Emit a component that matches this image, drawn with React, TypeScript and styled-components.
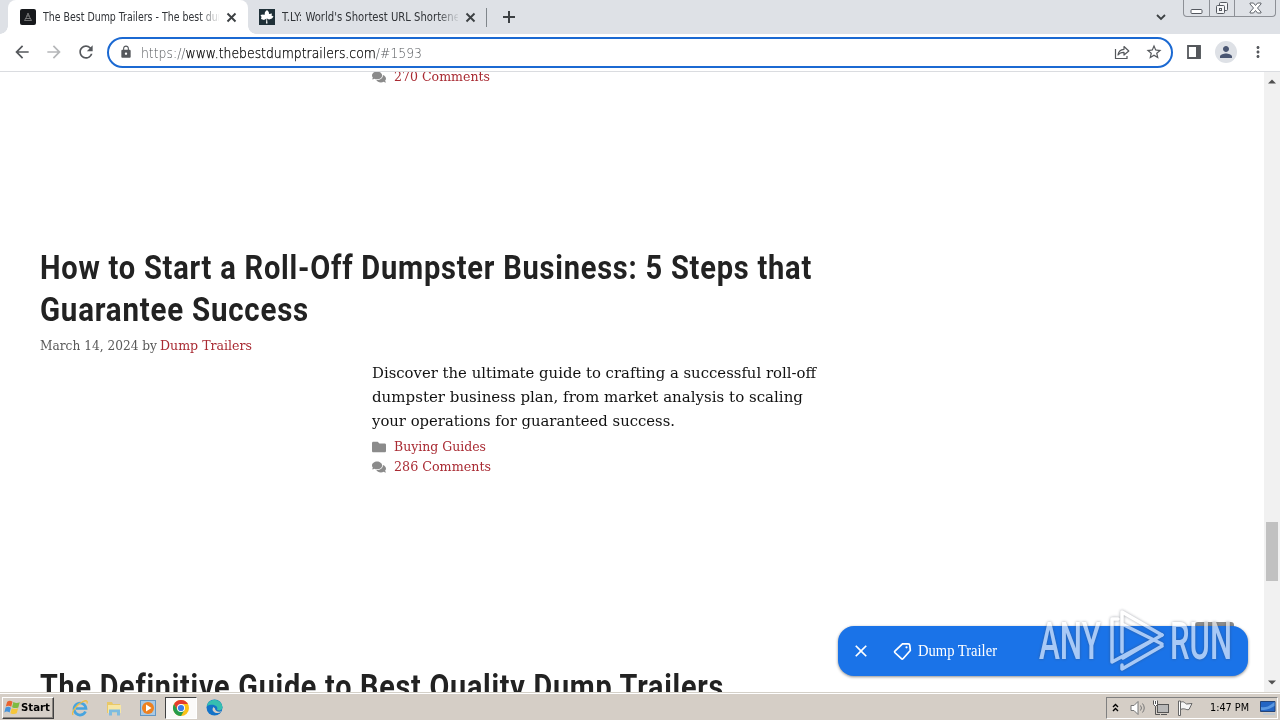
import React, { useLayoutEffect, useRef, useState } from "react";
import styled, { createGlobalStyle, css } from "styled-components";
import { FaComments, FaFolder } from "react-icons/fa";
import { MdArrowBack, MdArrowForward, MdClose, MdLock, MdMoreVert, MdPerson, MdRefresh, MdStarBorder } from "react-icons/md";

const GlobalStyle = createGlobalStyle`
  * { box-sizing: border-box; }
  html, body { margin: 0; padding: 0; background: #fff; overflow: hidden; }
  svg { display: block; flex: none; overflow: visible; }
`;

const uiFont = `"DejaVu Sans Condensed", "DejaVu Sans", sans-serif`;
const slabFont = `"DejaVu Serif", serif`;

const Screen = styled.div`
  position: relative;
  display: flex;
  flex-direction: column;
  width: 1280px;
  height: 720px;
  overflow: hidden;
  font-family: ${uiFont};
`;

/* text squeezed or stretched to a given width */
const FitBox = styled.span<{ $width: number }>`
  display: inline-block;
  flex: none;
  width: ${(p) => p.$width}px;
  white-space: nowrap;
`;

const FitInner = styled.span`
  display: inline-block;
  transform-origin: 0 50%;
`;

function Fit({ width, children }: { width: number; children: React.ReactNode }) {
  const ref = useRef<HTMLSpanElement>(null);
  const [scale, setScale] = useState(1);

  useLayoutEffect(() => {
    const natural = parseFloat(getComputedStyle(ref.current!).width);
    if (natural) setScale(width / natural);
  }, [width]);

  return (
    <FitBox $width={width}>
      <FitInner ref={ref} style={{ transform: `scaleX(${scale})` }}>
        {children}
      </FitInner>
    </FitBox>
  );
}

/* ---------- tab strip ---------- */

const TabStrip = styled.div`
  display: flex;
  height: 34px;
  padding-left: 8px;
  background: #dee1e6;
`;

const Tab = styled.div<{ $active?: boolean }>`
  position: relative;
  display: flex;
  align-items: center;
  width: ${(p) => (p.$active ? 240 : 238)}px;
  padding-left: ${(p) => (p.$active ? 12 : 11)}px;
  font-size: 11.5px;
  color: #303337;
  ${(p) =>
    p.$active &&
    css`
      background: #fff;
      border-radius: 8px 8px 0 0;
      &::before,
      &::after {
        content: "";
        position: absolute;
        bottom: 0;
        width: 8px;
        height: 8px;
      }
      &::before {
        left: -8px;
        background: radial-gradient(circle at 0 0, #dee1e6 7.5px, #fff 8px);
      }
      &::after {
        right: -8px;
        background: radial-gradient(circle at 100% 0, #dee1e6 7.5px, #fff 8px);
      }
    `}
`;

const TabTitle = styled.div`
  width: 176px;
  margin: 0 7px;
  overflow: hidden;
  line-height: 18px;
  mask-image: linear-gradient(90deg, #000 155px, transparent 178px);
`;

const TabDivider = styled.div`
  width: 1px;
  height: 19px;
  margin: 8px 15px 0 0;
  background: #80868b;
`;

const NewTab = styled.div`
  padding-top: 10px;
`;

const StripEnd = styled.div`
  display: flex;
  margin-left: auto;
  padding-right: 4px;
  gap: 15px;
`;

const TabSearch = styled.div`
  padding-top: 12px;
`;

const WindowButtons = styled.div`
  display: flex;
  width: 93px;
  height: 17px;
  border: 1px solid #8d9096;
  border-top: 0;
  border-radius: 0 0 4px 4px;
`;

const WindowButton = styled.div<{ $width: number }>`
  display: flex;
  justify-content: center;
  align-items: center;
  width: ${(p) => p.$width}px;
  & + & {
    border-left: 1px solid #8d9096;
  }
`;

/* ---------- toolbar ---------- */

const Toolbar = styled.div`
  display: flex;
  align-items: center;
  height: 38px;
  padding: 0 13px 1px 12px;
  border-bottom: 1px solid #dadce0;
  background: #fff;
  color: #55585c;
`;

const NavButtons = styled.div`
  display: flex;
  gap: 12px;
  width: 95px;
`;

const AddressBar = styled.div`
  display: flex;
  align-items: center;
  width: 1066px;
  height: 31px;
  padding: 0 8px 0 10px;
  border: 2px solid #1b69d2;
  border-radius: 16px;
`;

const Url = styled.div`
  margin-left: 8px;
  padding-top: 1px;
  font-family: "DejaVu Sans", sans-serif;
  font-weight: 200;
  font-size: 14px;
  line-height: 20px;
  color: #55585c;
  b {
    font-weight: 200;
    color: #000;
    -webkit-text-stroke: 0.25px #000;
  }
`;

const AddressActions = styled.div`
  display: flex;
  align-items: center;
  gap: 15px;
  margin-left: auto;
`;

const ToolbarActions = styled.div`
  display: flex;
  align-items: center;
  margin-left: 14px;
`;

const Avatar = styled.div`
  display: flex;
  justify-content: center;
  align-items: center;
  width: 22px;
  height: 22px;
  margin: 0 12px 0 14px;
  border-radius: 50%;
  background: #dee1e6;
  color: #4a5672;
`;

/* ---------- page ---------- */

const Viewport = styled.div`
  display: flex;
  justify-content: space-between;
  height: 620px;
  overflow: hidden;
  background: #fff;
`;

const Posts = styled.main`
  width: 860px;
  padding-left: 40px;
`;

const Post = styled.article`
  height: 419px;
`;

const PreviousPost = styled.div`
  height: 179px;
  padding: 0 0 0 332px;
  margin-top: -5px;
`;

const PostTitle = styled.h2`
  display: flex;
  flex-direction: column;
  margin: 0;
  font-family: Roboto, sans-serif;
  font-weight: 700;
  font-size: 34px;
  line-height: 42px;
  letter-spacing: 0.9px;
  color: #222;
`;

const Meta = styled.div`
  display: flex;
  height: 30px;
  padding-top: 6px;
  font-family: ${slabFont};
  font-size: 12.5px;
  line-height: 20px;
  gap: 3px;
  color: #595959;
`;

const PostLink = styled.a`
  color: #a92b33;
`;

const Summary = styled.div`
  display: flex;
  flex-direction: column;
  padding: 1px 0 0 332px;
  font-family: ${slabFont};
  font-size: 15px;
  line-height: 24px;
  color: #111;
`;

const EntryRow = styled.div`
  display: flex;
  align-items: center;
  gap: 8px;
  height: 20px;
  font-family: ${slabFont};
  font-size: 12.5px;
  line-height: 20px;
  color: #8b8b8b;
`;

const EntryMeta = styled.div`
  padding: 4px 0 0 332px;
`;

const Scrollbar = styled.div`
  display: flex;
  flex-direction: column;
  align-items: center;
  width: 16px;
  padding: 7px 0;
  background: #f1f1f1;
`;

const ScrollThumb = styled.div`
  width: 12px;
  height: 59px;
  margin: 438px 0 auto;
  background: #c1c1c1;
`;

const BackToTop = styled.div`
  position: absolute;
  left: 1195px;
  top: 622px;
  width: 39px;
  height: 20px;
  border-radius: 3px;
  background: #8c8c8c;
`;

const AnchorBar = styled.div`
  position: absolute;
  left: 838px;
  top: 626px;
  display: flex;
  align-items: center;
  width: 410px;
  height: 50px;
  padding-left: 13px;
  border-radius: 16px;
  background: #1a73e8;
  box-shadow: 0 1px 3px rgba(0, 0, 0, 0.45);
  font-family: "Liberation Serif", serif;
  font-size: 16px;
  color: #fff;
  gap: 6px;
`;

const TagIcon = styled.svg`
  margin-left: 16px;
`;

const Watermark = styled.div`
  position: absolute;
  left: 1039px;
  top: 608px;
  display: flex;
  height: 66px;
  gap: 7px;
  font-family: Roboto, sans-serif;
  font-weight: 500;
  font-size: 51px;
  line-height: 68px;
  color: #fff;
  opacity: 0.62;
  filter: drop-shadow(0 0 1.5px rgba(60, 65, 80, 0.75));
`;

/* ---------- taskbar ---------- */

const Taskbar = styled.div`
  display: flex;
  align-items: center;
  height: 28px;
  padding: 2px 2px 0;
  border-top: 1px solid #d4d0c8;
  box-shadow: inset 0 1px 0 #fff;
  background: #d5cec6;
`;

const StartButton = styled.div`
  display: flex;
  align-items: center;
  width: 52px;
  height: 22px;
  padding-left: 1px;
  border: 1px solid;
  border-color: #fff #404040 #404040 #fff;
  box-shadow: inset -1px -1px 0 #8a8580;
  font-weight: 700;
  font-size: 11px;
  line-height: 14px;
  color: #000;
`;

const QuickLaunch = styled.div`
  display: flex;
  align-items: center;
  margin-left: 9px;
`;

const LaunchItem = styled.div<{ $pressed?: boolean }>`
  display: flex;
  justify-content: center;
  align-items: center;
  width: ${(p) => (p.$pressed ? 32 : 34)}px;
  height: 22px;
  ${(p) =>
    p.$pressed &&
    css`
      border: 1px solid;
      border-color: #404040 #fff #fff #404040;
      background: #fbfaf9;
    `}
`;

const Tray = styled.div`
  display: flex;
  align-items: center;
  width: 172px;
  height: 22px;
  margin-left: auto;
  padding-left: 5px;
  border: 1px solid;
  border-color: #808080 #fff #fff #808080;
  font-size: 11px;
  color: #000;
`;

const TrayIcon = styled.svg<{ $gap: number }>`
  margin-right: ${(p) => p.$gap}px;
`;

const DesktopIcon = styled.svg`
  margin-left: 11px;
`;

const Comments = ({ count, width }: { count: string; width: number }) => (
  <EntryRow>
    <FaComments size={14} />
    <PostLink>
      <Fit width={width}>{count} Comments</Fit>
    </PostLink>
  </EntryRow>
);

const TabClose = () => (
  <svg width="11" height="11" viewBox="0 0 11 11">
    <path d="m1.500 1.500 8 8M9.500 1.500l-8 8" stroke="#3c4043" strokeWidth="1.900" />
  </svg>
);

function BrowserTabs() {
  return (
    <TabStrip>
      <Tab $active>
        <svg width="16" height="16" viewBox="0 0 16 16">
          <rect width="16" height="16" rx="2" fill="#17191c" />
          <path d="M8 4 9.500 8l2 3.500h-7l2-3.500Z M6.500 7h3 M5.500 9.500h5" fill="none" stroke="#8a8a8a" strokeWidth=".8" />
        </svg>
        <TabTitle>
          <Fit width={190}>The Best Dump Trailers - The best dump</Fit>
        </TabTitle>
        <TabClose />
      </Tab>
      <Tab>
        <svg width="16" height="16" viewBox="0 0 16 16">
          <rect width="16" height="16" fill="#1f3038" />
          <path d="m8 1 1.800 2 .2 2 3-.5-.5 2 2 1-1.500 2-3 1-2-1 .5 5H7l.5-5-2.500 1.500-3-1 .5-2L1.500 6 4 5.500l1.500.500L6 3Z" fill="#fff" />
        </svg>
        <TabTitle>
          <Fit width={182}>T.LY: World's Shortest URL Shortener</Fit>
        </TabTitle>
        <TabClose />
      </Tab>
      <TabDivider />
      <NewTab>
        <svg width="14" height="14" viewBox="0 0 14 14">
          <path d="M7 1v12M1 7h12" stroke="#3c4043" strokeWidth="2" />
        </svg>
      </NewTab>
      <StripEnd>
        <TabSearch>
          <svg width="14" height="10" viewBox="0 0 14 10">
            <path d="m3 3 4 4 4-4" fill="none" stroke="#3c4043" strokeWidth="1.800" />
          </svg>
        </TabSearch>
        <WindowButtons>
          <WindowButton $width={25}>
            <svg width="13" height="14" viewBox="0 0 13 14">
              <rect x="1" y="8.500" width="11" height="4" rx="1" fill="#fff" stroke="#555960" />
            </svg>
          </WindowButton>
          <WindowButton $width={25}>
            <svg width="14" height="14" viewBox="0 0 14 14" fill="#f4f5f7" stroke="#555960">
              <rect x="4.500" y="1.500" width="8" height="8" rx="1" />
              <rect x="1.500" y="4.500" width="8" height="8" rx="1" />
              <rect x="4.500" y="7.500" width="2" height="2" />
            </svg>
          </WindowButton>
          <WindowButton $width={41}>
            <svg width="13" height="12" viewBox="0 0 13 12">
              <path d="M1 1h3.500l2 2.500L8.500 1H12v1L8.500 6l3.500 4v1H8.500l-2-2.500-2 2.500H1v-1l3.500-4L1 2Z" fill="#fff" stroke="#62666d" />
            </svg>
          </WindowButton>
        </WindowButtons>
      </StripEnd>
    </TabStrip>
  );
}

function BrowserToolbar() {
  return (
    <Toolbar>
      <NavButtons>
        <MdArrowBack size={20} />
        <MdArrowForward size={20} color="#b5b7b9" />
        <MdRefresh size={20} />
      </NavButtons>
      <AddressBar>
        <MdLock size={14} />
        <Url>
          <Fit width={281}>
            https://<b>www.thebestdumptrailers.com</b>/#1593
          </Fit>
        </Url>
        <AddressActions>
          <svg width="16" height="16" viewBox="0 0 16 16" fill="none" stroke="currentColor" strokeWidth="1.200">
            <path d="M1.500 5v9.500H13V12" />
            <path d="M4 11c.4-3.600 2.500-5.500 6-5.700V2.500L14.800 7 10 11V8.300C7.300 8.200 5.500 9 4 11Z" strokeLinejoin="round" />
          </svg>
          <MdStarBorder size={18} />
        </AddressActions>
      </AddressBar>
      <ToolbarActions>
        <svg width="14" height="14" viewBox="0 0 14 14">
          <path d="M1 1h12v12H1Z" fill="none" stroke="currentColor" strokeWidth="1.800" />
          <path d="M9 1h4.500v12H9Z" fill="currentColor" />
        </svg>
        <Avatar>
          <MdPerson size={18} />
        </Avatar>
        <MdMoreVert size={18} />
      </ToolbarActions>
    </Toolbar>
  );
}

function BlogPage() {
  return (
    <Viewport>
      <Posts>
        <PreviousPost>
          <Comments count="270" width={96} />
        </PreviousPost>
        <Post>
          <PostTitle>
            <Fit width={772}>How to Start a Roll-Off Dumpster Business: 5 Steps that</Fit>
            <Fit width={269}>Guarantee Success</Fit>
          </PostTitle>
          <Meta>
            <Fit width={117}>March 14, 2024 by</Fit>
            <PostLink>
              <Fit width={92}>Dump Trailers</Fit>
            </PostLink>
          </Meta>
          <Summary>
            <Fit width={444}>Discover the ultimate guide to crafting a successful roll-off</Fit>
            <Fit width={431}>dumpster business plan, from market analysis to scaling</Fit>
            <Fit width={303}>your operations for guaranteed success.</Fit>
          </Summary>
          <EntryMeta>
            <EntryRow>
              <FaFolder size={14} />
              <PostLink>
                <Fit width={92}>Buying Guides</Fit>
              </PostLink>
            </EntryRow>
            <Comments count="286" width={97} />
          </EntryMeta>
        </Post>
        <PostTitle>
          <Fit width={684}>The Definitive Guide to Best Quality Dump Trailers</Fit>
        </PostTitle>
      </Posts>
      <Scrollbar>
        <svg width="8" height="5" viewBox="0 0 8 5">
          <path d="M0 4.500 4 .5l4 4Z" fill="#505050" />
        </svg>
        <ScrollThumb />
        <svg width="8" height="5" viewBox="0 0 8 5">
          <path d="m0 .5 4 4 4-4Z" fill="#505050" />
        </svg>
      </Scrollbar>
    </Viewport>
  );
}

function WindowsTaskbar() {
  return (
    <Taskbar>
      <StartButton>
        <svg width="17" height="17" viewBox="0 0 16 16">
          <path d="M3 2.500C5 1 6.500 1.500 8 2.500L6.800 7.300C5 6 3.500 6.200 1.700 7Z" fill="#e9632f" />
          <path d="M8.800 2.800c2 1.200 4 1.200 6 .2L13.500 8c-2 .9-4 .6-5.900-.3Z" fill="#7dbb42" />
          <path d="M1.500 8c2-1 3.500-.9 5 .2l-1.200 4.600c-1.800-1.200-3.300-1.200-5-.2Z" fill="#4694dc" />
          <path d="M7.300 8.700c2 1 4 1 6 .1L12 13.500c-2 1-4 .8-6-.2Z" fill="#f5c63b" />
        </svg>
        <Fit width={29}>Start</Fit>
      </StartButton>
      <QuickLaunch>
        <LaunchItem>
          <svg width="18" height="18" viewBox="0 0 18 18" fill="none">
            <path d="M14.500 12.500A6 6 0 1 1 15 9.500H5" stroke="#47a4df" strokeWidth="2.700" />
            <path d="M2 16C0 13 6 5 12 2.500c3-1.300 5-1 4 2" stroke="#efbd40" strokeWidth="1.300" />
          </svg>
        </LaunchItem>
        <LaunchItem>
          <svg width="16" height="16" viewBox="0 0 16 16">
            <path d="M1 2h5l1 2h7v9H1Z" fill="#e9c867" />
            <path d="M2 5h13v8H2Z" fill="#f7e6a4" />
            <path d="M3 15.500V9.500h11V15.500H11v-3H6v3Z" fill="#7dbbe0" />
          </svg>
        </LaunchItem>
        <LaunchItem>
          <svg width="16" height="16" viewBox="0 0 16 16">
            <rect x=".5" y=".5" width="15" height="15" fill="#a9c9e4" stroke="#6296c4" />
            <circle cx="8" cy="8" r="6" fill="#ee8120" />
            <path d="m6 4.500 5.500 3.500L6 11.500Z" fill="#fff" />
          </svg>
        </LaunchItem>
        <LaunchItem $pressed>
          <svg width="16" height="16" viewBox="0 0 16 16">
            <circle cx="8" cy="8" r="8" fill="#fbc116" />
            <path d="M1.070 4A8 8 0 0 1 14.930 4H8L4.540 10Z" fill="#e33b2e" />
            <path d="M1.070 4A8 8 0 0 0 8 16l3.460-6-6.920 0Z" fill="#269c4c" />
            <circle cx="8" cy="8" r="4" fill="#fff" />
            <circle cx="8" cy="8" r="3.100" fill="#3a7de8" />
          </svg>
        </LaunchItem>
        <LaunchItem>
          <svg width="17" height="17" viewBox="0 0 17 17">
            <circle cx="8.500" cy="8.500" r="8" fill="#1473c8" />
            <path d="M.7 7A8 8 0 0 1 16.500 8c0 3-2.500 4-5.500 3 2-4-4-7-10.300-4Z" fill="#36bfb0" />
            <path d="M7.500 8c-2.500 3 .5 6.500 4.500 6 2-.2 3-1 3.500-1.800-3 1.300-6.500-.2-6.500-2.700Z" fill="#d5cec6" />
          </svg>
        </LaunchItem>
      </QuickLaunch>
      <Tray>
        <TrayIcon $gap={11} width="7" height="10" viewBox="0 0 7 10">
          <path d="m1 4 2.500-2.500L6 4M1 8l2.500-2.500L6 8" fill="none" stroke="#000" strokeWidth="1.400" />
        </TrayIcon>
        <TrayIcon $gap={6} width="17" height="16" viewBox="0 0 17 16" stroke="#777">
          <path d="M1 5.500h3l4-4v13l-4-4H1Z" fill="#fff" />
          <path d="M10.500 5.500q2 2.500 0 5M12.500 3.500q3.500 4.500 0 9" fill="none" />
        </TrayIcon>
        <TrayIcon $gap={8} width="16" height="16" viewBox="0 0 16 16" stroke="#555">
          <rect x="4.500" y="4.500" width="11" height="8" fill="#b8b8b8" />
          <path d="M8 14.500h6M2.500 6v8.500H7" fill="none" />
          <path d="M.5.500v4l2 2 2-2v-4M2.500 1v3" fill="#fff" />
        </TrayIcon>
        <TrayIcon $gap={17} width="16" height="16" viewBox="0 0 16 16" stroke="#666">
          <path d="M1.500 1v14.500h2V1Z" fill="#fff" />
          <path d="M3.500 2.500c3-2 4 .5 6 1.500l5.500-.500-3 6c-3 1-4-2-8.500 0Z" fill="#f6f6f6" />
        </TrayIcon>
        <Fit width={39}>1:47 PM</Fit>
        <DesktopIcon width="16" height="14" viewBox="0 0 16 14">
          <path d="M.5.500h14.500v10H.5Z" fill="#2465c3" stroke="#254477" />
          <path d="M1 6C6 7 10 5 14.500 1v4C10 8 6 9 1 9Z" fill="#5b98e0" />
          <path d="M3 13h12" stroke="#a8c3e0" />
        </DesktopIcon>
      </Tray>
    </Taskbar>
  );
}

export default function App() {
  return (
    <Screen>
      <GlobalStyle />
      <BrowserTabs />
      <BrowserToolbar />
      <BlogPage />
      <WindowsTaskbar />
      <BackToTop />
      <AnchorBar>
        <MdClose size={20} />
        <TagIcon width="19" height="19" viewBox="0 0 19 19" fill="none" stroke="#fff" strokeWidth="1.700">
          <path d="M9.500 1.800h5.700q1.500 0 1.600 1.500l.5 5.200-7.300 8.200q-.8.800-1.600 0L1.800 10.500q-.6-.7.1-1.400Z" />
          <circle cx="13.500" cy="5.300" r="1.100" fill="#fff" stroke="none" />
        </TagIcon>
        <Fit width={79}>Dump Trailer</Fit>
      </AnchorBar>
      <Watermark>
        <Fit width={62}>ANY</Fit>
        <svg width="55" height="64" viewBox="0 0 55 64" fill="none" stroke="#fff" strokeWidth="3.500" strokeLinejoin="round" strokeLinecap="round">
          <path d="M14 44V4l40 23M16 17l38 19" />
          <path d="M54 27 15 50M54 38 14 61V57" />
          <path d="M10 11H4V54l39-21" />
        </svg>
        <Fit width={62}>RUN</Fit>
      </Watermark>
    </Screen>
  );
}
